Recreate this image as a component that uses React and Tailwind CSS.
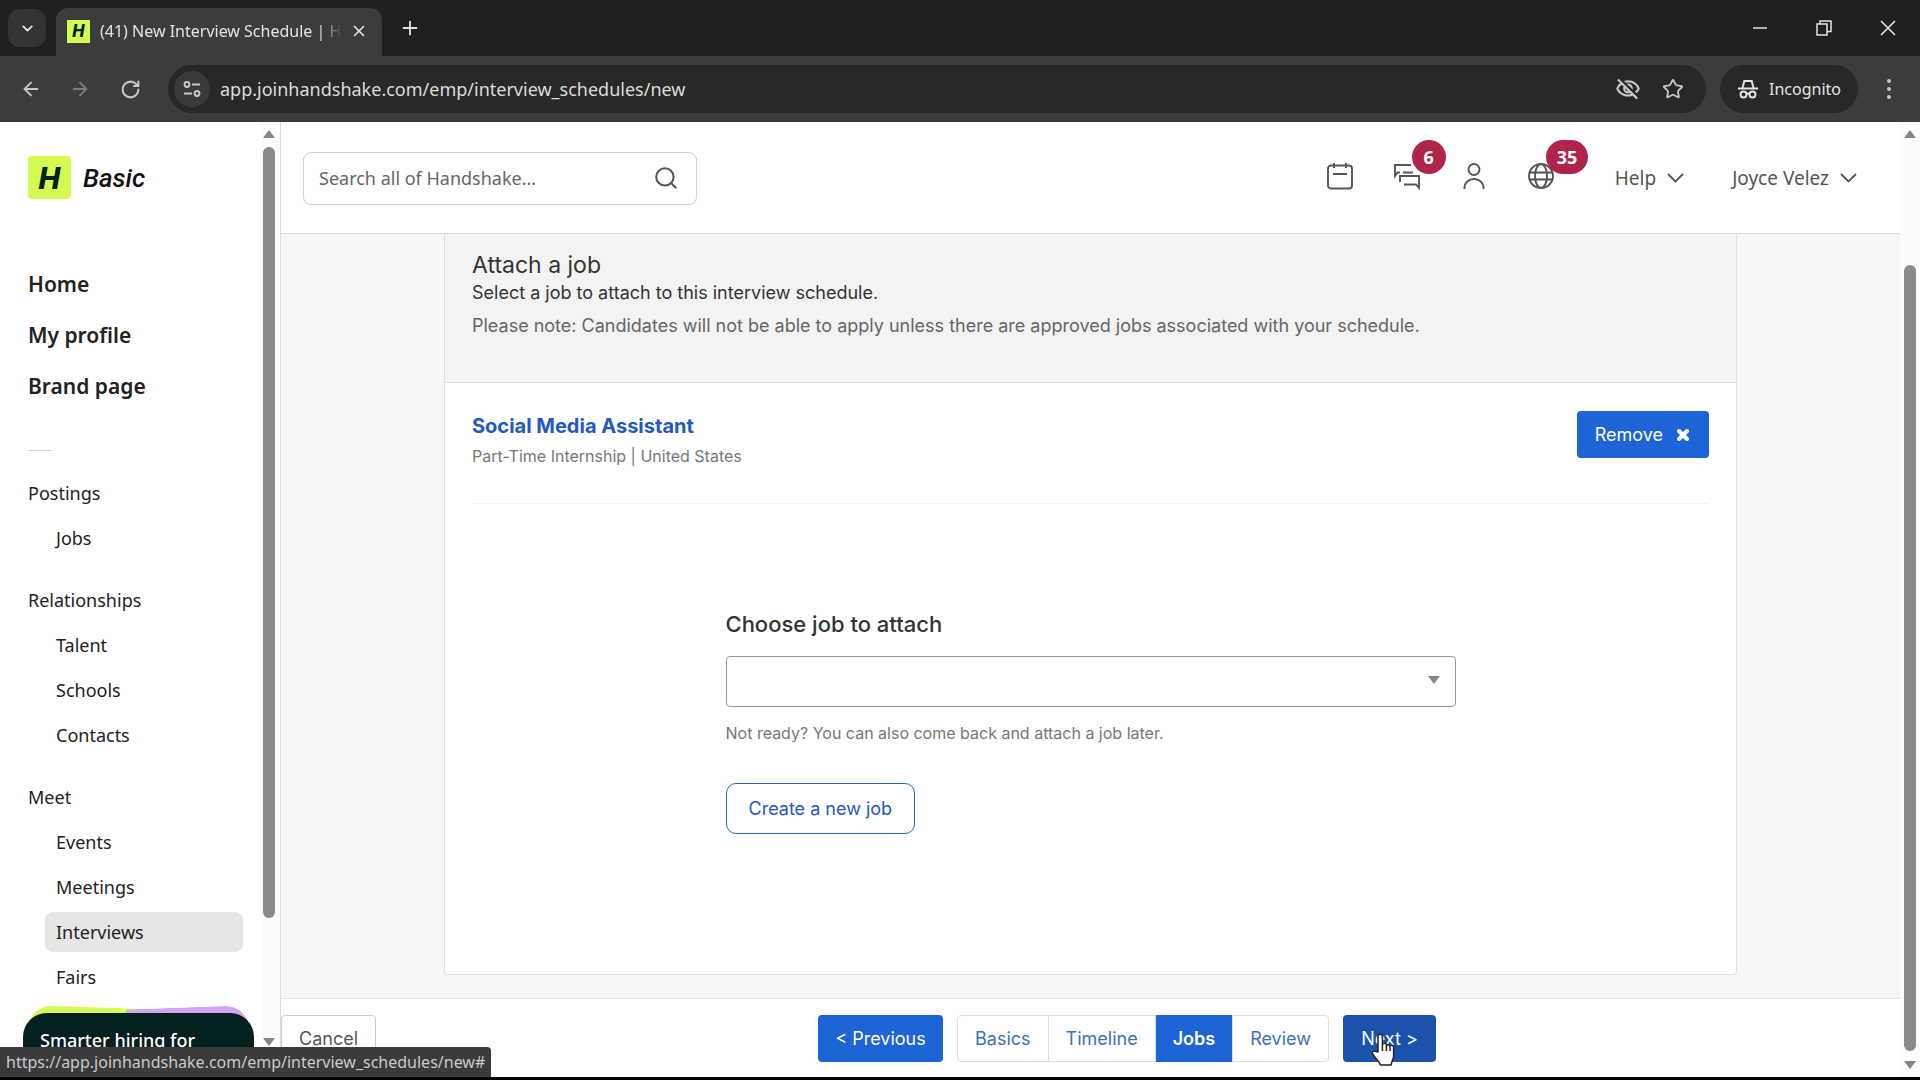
import { ArrowLeft, ArrowRight, ChevronDown, Plus, RotateCw, Search, Star, X } from 'lucide-react';
import { MdOutlineVisibilityOff } from 'react-icons/md';

const mainLinks = ['Home', 'My profile', 'Brand page'];

const sections = [
    { title: 'Postings', items: ['Jobs'] },
    { title: 'Relationships', items: ['Talent', 'Schools', 'Contacts'] },
    { title: 'Meet', items: ['Events', 'Meetings', 'Interviews', 'Fairs'] },
];

const steps = ['Basics', 'Timeline', 'Jobs', 'Review'];

const TuneIcon = () => (
    <svg width="20" height="20" viewBox="0 0 20 20" fill="none" stroke="currentColor" strokeWidth="2">
        <circle cx="5" cy="5.5" r="2.4" />
        <path d="M10 5.5h8M2 14.5h8" />
        <circle cx="15" cy="14.5" r="2.4" />
    </svg>
);

const IncognitoIcon = () => (
    <svg width="22" height="22" viewBox="0 0 22 22" fill="none" stroke="currentColor" strokeWidth="2">
        <path d="M1 10.5h20M5.5 10 7.3 3h7.4l1.8 7" />
        <circle cx="6.5" cy="16.5" r="3" />
        <circle cx="15.5" cy="16.5" r="3" />
        <path d="M9.5 16q1.5-1 3 0" />
    </svg>
);

const CalendarIcon = () => (
    <svg width="28" height="28" viewBox="0 0 28 28" fill="none" stroke="currentColor" strokeWidth="1.9">
        <rect x="2" y="3.5" width="24" height="23" rx="3" />
        <path d="M8 1v5M20 1v5M7 12h14" />
    </svg>
);

const ChatIcon = () => (
    <svg width="28" height="28" viewBox="0 0 28 28" fill="none" stroke="currentColor" strokeWidth="1.9">
        <path d="M18 3H2v11l2.5-3.500H7M10 10.500h10" />
        <path d="M7 20v-6h19v12l-3-3.500H11" />
    </svg>
);

const PersonIcon = () => (
    <svg width="28" height="28" viewBox="0 0 28 28" fill="none" stroke="currentColor" strokeWidth="1.9">
        <circle cx="14" cy="7.5" r="5.5" />
        <path d="M4.5 27v-1.5a9.5 8.5 0 0 1 19 0V27" />
    </svg>
);

const GlobeIcon = () => (
    <svg width="28" height="28" viewBox="0 0 28 28" fill="none" stroke="currentColor" strokeWidth="1.9">
        <circle cx="14" cy="14" r="12" />
        <ellipse cx="14" cy="14" rx="6" ry="12" />
        <path d="M2.5 10.5h23M2.5 17.5h23" />
    </svg>
);

const MenuChevron = () => (
    <svg width="17" height="10" viewBox="0 0 17 10" fill="none" stroke="currentColor" strokeWidth="1.8">
        <path d="m1 1 7.5 7.5L16 1" />
    </svg>
);

const HandCursor = () => (
    <svg width="24" height="34" viewBox="0 0 24 34" fill="#fff" stroke="#222" strokeWidth="1.5" strokeLinejoin="round">
        <path d="M7 19V3.5a2.2 2.2 0 0 1 4.4 0V12a2 2 0 0 1 4 .6 2 2 0 0 1 3.6 1 1.9 1.9 0 0 1 3.6 1.2V23c0 3-2 5-2.5 9H9.5C8 28 3 24 1.5 20.5c-.8-2 1.2-3.3 2.8-2.2Z" />
        <path d="M11.4 12v6M15.4 13v5M19 14v4" fill="none" />
    </svg>
);

const Arrow = ({ down }) => (
    <svg width="12" height="8" viewBox="0 0 12 8" fill="#858585" className="shrink-0">
        <path d={down ? 'M0 0h12L6 8z' : 'M0 8h12L6 0z'} />
    </svg>
);

const Mark = ({ className }) => (
    <span className={`${className} shrink-0 bg-[#d3fb52] text-[#062020] flex items-center justify-center font-[Roboto,sans-serif] font-extrabold italic`}>
        H
    </span>
);

const TabStrip = () => (
    <div className="h-14 shrink-0 bg-[#202020] flex items-end text-[#e3e3e3]">
        <button aria-label="Search tabs" className="self-center ml-2 size-[38px] rounded-xl bg-[#343434] flex items-center justify-center">
            <ChevronDown size={17} strokeWidth={2.5} />
        </button>
        <div className="ml-[10px] w-[326px] h-12 rounded-t-xl bg-[#3c3c3c] flex items-center pl-[11px] pr-[14px] pb-[2px]">
            <Mark className="size-[23px] text-lg" />
            <span className="ml-[10px] flex-1 text-base whitespace-nowrap overflow-hidden mask-r-from-90%">
                (41) New Interview Schedule | Handshake
            </span>
            <button aria-label="Close tab" className="ml-2">
                <X size={18} strokeWidth={2.2} />
            </button>
        </div>
        <button aria-label="New tab" className="self-center ml-[17px]">
            <Plus size={22} />
        </button>
        <div className="ml-auto self-center flex items-center gap-11 pr-[22px]">
            <button aria-label="Minimize" className="size-5">
                <svg viewBox="0 0 20 20" stroke="currentColor" strokeWidth="1.5"><path d="M3 10h14" /></svg>
            </button>
            <button aria-label="Restore" className="size-5">
                <svg viewBox="0 0 20 20" fill="none" stroke="currentColor" strokeWidth="1.5">
                    <path d="M3 6h10v11H3zM6 6V3h11v10.5h-4" />
                </svg>
            </button>
            <button aria-label="Close window" className="size-5">
                <svg viewBox="0 0 20 20" stroke="currentColor" strokeWidth="1.6"><path d="m3 3 14 14M17 3 3 17" /></svg>
            </button>
        </div>
    </div>
);

const Toolbar = () => (
    <div className="h-[66px] shrink-0 bg-[#3c3c3c] flex items-center pl-5 pr-5 text-[#c7c7c7]">
        <button aria-label="Back"><ArrowLeft size={22} /></button>
        <button aria-label="Forward" className="ml-[27px] text-[#7d7d7d]"><ArrowRight size={22} /></button>
        <button aria-label="Reload" className="ml-[29px]"><RotateCw size={21} strokeWidth={2.3} /></button>
        <div className="ml-[27px] flex-1 h-12 rounded-full bg-[#282828] flex items-center pl-[6px] pr-[22px]">
            <button aria-label="Site information" className="size-9 rounded-full bg-[#3a3a3a] flex items-center justify-center">
                <TuneIcon />
            </button>
            <input
                aria-label="Address"
                defaultValue="app.joinhandshake.com/emp/interview_schedules/new"
                className="ml-[10px] flex-1 text-lg text-[#dcdcdc] outline-none"
            />
            <MdOutlineVisibilityOff size={26} />
            <button aria-label="Bookmark" className="ml-[21px]"><Star size={22} /></button>
        </div>
        <div className="ml-[14px] h-12 w-[138px] rounded-full bg-[#282828] flex items-center justify-center gap-[10px] text-[#e3e3e3]">
            <IncognitoIcon />
            <span className="text-base">Incognito</span>
        </div>
        <button aria-label="Menu" className="ml-5">
            <svg width="22" height="22" viewBox="0 0 22 22" fill="currentColor">
                <circle cx="11" cy="3" r="2" />
                <circle cx="11" cy="11" r="2" />
                <circle cx="11" cy="19" r="2" />
            </svg>
        </button>
    </div>
);

const Sidebar = () => (
    <aside className="w-[281px] shrink-0 border-r border-[#dcdcdc] bg-white flex overflow-hidden">
        <div className="flex-1 min-w-0 pl-7 text-[#222]">
            <div className="mt-[34px] flex items-center gap-3">
                <Mark className="size-[43px] rounded-sm text-[32px]" />
                <span className="text-[26px] leading-10 font-medium italic text-[#111] font-[Roboto,sans-serif]">Basic</span>
            </div>
            <nav>
                <ul className="mt-[65px] flex flex-col gap-[11px]">
                    {mainLinks.map((label) => (
                        <li key={label} className="h-10 flex items-center">
                            <a href="#" className="text-[21px] leading-7 font-semibold">{label}</a>
                        </li>
                    ))}
                </ul>
                <hr className="mt-11 mb-[22px] w-6 border-[#d5d5d5]" />
                <div className="flex flex-col gap-[22px] text-lg">
                    {sections.map((section) => (
                        <div key={section.title}>
                            <p className="h-10 flex items-center">{section.title}</p>
                            <ul className="mt-[5px] ml-[17px] mr-[19px] flex flex-col gap-[5px]">
                                {section.items.map((item) => (
                                    <li key={item}>
                                        <a
                                            href="#"
                                            className={`h-10 flex items-center px-[11px] rounded-lg ${item === 'Interviews' ? 'bg-[#e6e6e6]' : ''}`}
                                        >
                                            {item}
                                        </a>
                                    </li>
                                ))}
                            </ul>
                        </div>
                    ))}
                </div>
            </nav>

            {/* Promo card */}
            <div className="relative mt-4 -ml-[5px] mr-2">
                <div className="absolute inset-x-1 -top-1 h-20 rounded-3xl bg-[#d3fb52] rotate-2" />
                <div className="absolute inset-x-1 -top-1 h-20 rounded-3xl bg-[#cfa6f0] -rotate-2 [clip-path:inset(0_0_0_45%)]" />
                <div className="relative h-24 rounded-3xl bg-[#04201f] pt-[13px] pl-[17px] text-lg font-medium text-white">
                    Smarter hiring for
                </div>
            </div>
        </div>
        <div className="w-[18px] shrink-0 flex flex-col items-center pt-2 pb-[31px] pr-[5px] bg-[#fcfcfc]">
            <Arrow />
            <div className="mt-[9px] w-3 h-[771px] rounded-full bg-[#8a8a8a]" />
            <div className="flex-1" />
            <Arrow down />
        </div>
    </aside>
);

const Badge = ({ children }) => (
    <span className="absolute left-[19px] -top-[22px] h-[34px] min-w-[34px] px-[11px] rounded-full bg-[#b0244c] text-white text-lg font-bold flex items-center justify-center">
        {children}
    </span>
);

const Header = () => (
    <header className="h-28 shrink-0 border-b border-[#dcdcdc] bg-white flex items-center justify-between pl-[22px] pr-[43px] pt-px text-[#555]">
        <div className="w-[394px] h-[53px] rounded-lg border border-[#d0d0d0] flex items-center pl-[15px] pr-[17px]">
            <input aria-label="Search" placeholder="Search all of Handshake..." className="flex-1 min-w-0 text-lg outline-none placeholder:text-[#666]" />
            <button aria-label="Submit search"><Search size={26} strokeWidth={1.9} /></button>
        </div>
        <div className="flex items-center">
            <div className="flex items-center gap-[39px] pb-1">
                <button aria-label="Calendar"><CalendarIcon /></button>
                <button aria-label="Messages" className="relative"><ChatIcon /><Badge>6</Badge></button>
                <button aria-label="People"><PersonIcon /></button>
                <button aria-label="Notifications" className="relative"><GlobeIcon /><Badge>35</Badge></button>
            </div>
            <button className="ml-[60px] flex items-center gap-[11px] text-[19px] leading-7">
                Help <MenuChevron />
            </button>
            <button className="ml-12 flex items-center gap-[11px] text-[19px] leading-7">
                Joyce Velez <MenuChevron />
            </button>
        </div>
    </header>
);

const JobCard = () => (
    <section className="w-full max-w-[1293px] mx-auto flex-1 mb-[23px] bg-white border border-t-0 border-[#dedede] rounded-b-sm">
        <div className="bg-[#f3f3f3] border-b border-[#dedede] px-[27px] pt-[17px] pb-[42px]">
            <h2 className="text-[23px] leading-7">Attach a job</h2>
            <p className="text-lg leading-7">Select a job to attach to this interview schedule.</p>
            <p className="mt-[5px] text-lg leading-7 text-[#666]">
                Please note: Candidates will not be able to apply unless there are approved jobs associated with your schedule.
            </p>
        </div>
        <div className="px-[27px]">
            <div className="pt-7 pb-8 flex justify-between border-b border-[#f3f3f3]">
                <div>
                    <a href="#" className="block text-xl leading-[30px] font-bold text-[#2459bd]">Social Media Assistant</a>
                    <p className="text-base leading-[30px] text-[#777]">Part-Time Internship | United States</p>
                </div>
                <button className="h-[47px] px-[18px] rounded-sm bg-[#1d64d6] text-white text-lg flex items-center gap-3">
                    Remove <X size={16} strokeWidth={6} />
                </button>
            </div>
            <div className="max-w-[730px] mx-auto mt-[106px]">
                <label htmlFor="job" className="block text-[22px] leading-7 font-medium">Choose job to attach</label>
                <div className="relative mt-[18px]">
                    <select id="job" className="w-full h-[51px] px-3 appearance-none border border-[#999] rounded-sm bg-white">
                        <option></option>
                    </select>
                    <span className="absolute right-4 top-5"><Arrow down /></span>
                </div>
                <p className="mt-3 text-base leading-7 text-[#777]">Not ready? You can also come back and attach a job later.</p>
                <button className="mt-9 h-[51px] px-[22px] rounded-[10px] border border-[#2f62b8] text-lg text-[#2459bd]">
                    Create a new job
                </button>
            </div>
        </div>
    </section>
);

const Footer = () => (
    <footer className="h-[79px] shrink-0 bg-white border-t border-[#e2e2e2] flex items-center pt-px pr-[22px] text-lg">
        <button className="h-[47px] w-[95px] rounded-sm border border-[#ccc] text-[#555]">Cancel</button>
        <div className="flex-1 flex justify-center">
            <button className="h-[47px] w-[125px] rounded-sm bg-[#1d64d6] text-white">&lt; Previous</button>
            <div className="mx-[14px] flex h-[47px] rounded-sm border border-[#dedede] divide-x divide-[#dedede]">
                {steps.map((step) => (
                    <button
                        key={step}
                        className={`px-[17px] ${step === 'Jobs' ? '-my-px bg-[#1d64d6] text-white font-semibold' : 'text-[#3f72b5]'}`}
                    >
                        {step}
                    </button>
                ))}
            </div>
            <button className="relative h-[47px] w-[93px] rounded-sm bg-[#1a52ae] text-white">
                Next &gt;
                <span className="absolute left-7 top-[18px]"><HandCursor /></span>
            </button>
        </div>
    </footer>
);

const App = () => {
    return (
        <div className="relative h-screen flex flex-col overflow-hidden bg-black pb-[3px] font-['Noto_Sans',sans-serif]">
            <TabStrip />
            <Toolbar />
            <div className="flex-1 min-h-0 flex">
                <Sidebar />
                <div className="flex-1 min-w-0 flex flex-col bg-[#f6f6f6]">
                    <Header />
                    <main className="flex-1 min-h-0 flex flex-col text-[#333] font-['Inter',sans-serif]">
                        <JobCard />
                        <Footer />
                    </main>
                </div>
                <div className="w-5 shrink-0 flex flex-col items-center pt-2 pb-2 bg-[#fcfcfc]">
                    <Arrow />
                    <div className="mt-[127px] mb-[10px] flex-1 w-3 rounded-full bg-[#8a8a8a]" />
                    <Arrow down />
                </div>
            </div>

            {/* Link target shown on hover */}
            <div className="absolute left-0 bottom-[3px] h-[30px] px-[6px] rounded-tr-sm bg-[#3b3b3b] text-[#c9c9c9] text-base flex items-center">
                https://app.joinhandshake.com/emp/interview_schedules/new#
            </div>
        </div>
    );
};

export default App;
